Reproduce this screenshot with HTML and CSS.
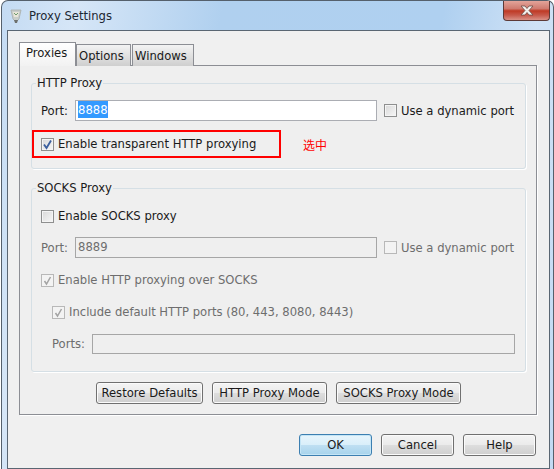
FILE: index.html
```html
<!DOCTYPE html>
<html lang="en">
  <head>
    <meta charset="UTF-8" />
    <title>Proxy Settings</title>
    <link rel="stylesheet" href="styles.css">
  </head>
  <body>
    <div class="window">
      <div class="titlebar">
        <svg class="appicon" width="12" height="16" viewBox="0 0 12 16">
          <path d="M1 2 L11 2 L9 11 Q6 15 3 11 Z" fill="#c9ceca" stroke="#a8ada9" stroke-width=".8"/>
          <path d="M3 4 L9 4 L8 9 L4 9 Z" fill="#e9e5d8"/>
          <path d="M4 5 L6 7 L8 5" fill="none" stroke="#6f9a6d" stroke-width="1"/>
          <path d="M4 12 L8 12 L7 15 L5 15 Z" fill="#6d706d"/>
        </svg>
        <span class="title">Proxy Settings</span>
        <div class="close">
          <svg width="16" height="11" viewBox="0 0 16 11">
            <path d="M2 1 H6 L8 3.5 L10 1 H14 L10 5.5 L14 10 H10 L8 7.5 L6 10 H2 L6 5.5 Z" fill="#f3f1ee" stroke="#6b4a44" stroke-width=".8"/>
          </svg>
        </div>
      </div>

      <div class="client">
        <div class="tabs">
          <div class="tab active">Proxies</div>
          <div class="tab tab-options">Options</div>
          <div class="tab tab-windows">Windows</div>
        </div>

        <div class="pane">
          <fieldset class="group">
            <legend>HTTP Proxy</legend>
            <div class="row port-row">
              <span class="label">Port:</span>
              <div class="field"><span class="selected">8888</span></div>
              <label class="check-label"><span class="check"></span>Use a dynamic port</label>
            </div>
            <div class="mark-row">
              <div class="redbox">
                <label class="check-label">
                  <span class="check">
                    <svg width="11" height="11" viewBox="0 0 11 11"><path d="M2 5.5 L4.5 9 L9 1.5" fill="none" stroke="#3b5f9e" stroke-width="1.8"/></svg>
                  </span>Enable transparent HTTP proxying
                </label>
              </div>
              <span class="note">选中</span>
            </div>
          </fieldset>

          <fieldset class="group socks">
            <legend>SOCKS Proxy</legend>
            <label class="check-label socks-enable"><span class="check"></span>Enable SOCKS proxy</label>
            <div class="row port-row off socks-port">
              <span class="label">Port:</span>
              <div class="field">8889</div>
              <label class="check-label"><span class="check"></span>Use a dynamic port</label>
            </div>
            <label class="check-label off spaced">
              <span class="check">
                <svg width="11" height="11" viewBox="0 0 11 11"><path d="M2.5 6 L4.5 9 L8.5 2" fill="none" stroke="#a3a3a3" stroke-width="1.5"/></svg>
              </span>Enable HTTP proxying over SOCKS
            </label>
            <label class="check-label off spaced indent">
              <span class="check">
                <svg width="11" height="11" viewBox="0 0 11 11"><path d="M2.5 6 L4.5 9 L8.5 2" fill="none" stroke="#a3a3a3" stroke-width="1.5"/></svg>
              </span>Include default HTTP ports (80, 443, 8080, 8443)
            </label>
            <div class="row ports-row off">
              <span class="label">Ports:</span>
              <div class="field wide"></div>
            </div>
          </fieldset>

          <div class="modes">
            <button class="btn btn-restore">Restore Defaults</button>
            <button class="btn btn-http">HTTP Proxy Mode</button>
            <button class="btn btn-socks">SOCKS Proxy Mode</button>
          </div>
        </div>

        <div class="footer">
          <button class="btn wide-btn default">OK</button>
          <button class="btn wide-btn">Cancel</button>
          <button class="btn wide-btn">Help</button>
        </div>
      </div>
    </div>
  </body>
</html>
```

FILE: styles.css
```css
html {
  font-family: "DejaVu Sans", sans-serif;
  font-size: 11.6px;
}

body {
  margin: 0;
  background-color: #fff;
  color: #1a1a1a;
  overflow: hidden;
}

.window {
  box-sizing: border-box;
  width: 553px;
  height: 469px;
  margin-left: 1px;
  padding: 0 3px 0 5px;
  border: 1px solid #55606c;
  border-bottom: 0;
  border-radius: 7px 7px 0 0;
  background: linear-gradient(100deg, #c4dbf3 0%, #d6e6f7 12%, #b0d0ef 35%, #afd0f0 70%, #cfe2f6 85%, #c2daf3 100%);
}

.titlebar {
  display: flex;
  align-items: center;
  height: 29px;
  padding-left: 3px;
}

.appicon {
  margin-right: 7px;
}

.title {
  color: #1c2733;
}

.close {
  display: flex;
  align-items: center;
  justify-content: center;
  box-sizing: border-box;
  width: 47px;
  height: 20px;
  margin: -9px 0 0 auto;
  border: 1px solid #5d3a37;
  border-top: 0;
  border-radius: 0 0 4px 4px;
  background: linear-gradient(#e3a49a 0%, #cf7b70 40%, #bf3a25 52%, #c75a4c 75%, #d99186 100%);
}

.client {
  box-sizing: border-box;
  height: 439px;
  padding: 11px 12px 0 11px;
  border: 1px solid #5a6673;
  background-color: #f0f0f0;
}

.tabs {
  display: flex;
  align-items: flex-end;
  height: 24px;
  margin-bottom: -1px;
}

.tab {
  box-sizing: border-box;
  height: 22px;
  padding: 0 0 0 2px;
  line-height: 22px;
  border: 1px solid #8c8e94;
  border-bottom: 0;
  background: linear-gradient(#f3f3f3, #cfcfcf);
}

.tab.active {
  position: relative;
  z-index: 1;
  width: 57px;
  height: 24px;
  margin-right: 0;
  padding-left: 6px;
  line-height: 21px;
  background: linear-gradient(#fff, #f2f2f2);
}

.tab-options {
  width: 55px;
}

.tab-windows {
  width: 62px;
  margin-left: 1px;
}

.pane {
  box-sizing: border-box;
  width: 518px;
  height: 350px;
  padding: 9px 10px 0 11px;
  border: 1px solid #8c8e94;
  background-color: #efefef;
  box-shadow: 1px 1px 0 #fff;
}

.group {
  box-sizing: border-box;
  width: 495px;
  margin: 0;
  padding: 9px 9px 0;
  border: 1px solid #d5dfe5;
  border-radius: 3px;
  box-shadow: 1px 1px 0 #fff;
  min-inline-size: 0;
}

.group legend {
  padding: 0 1px;
  margin-left: -5px;
  line-height: 16px;
}

.socks {
  height: 192px;
  margin-top: 11px;
  padding-top: 10px;
}

.row {
  display: flex;
  align-items: center;
}

.port-row .label {
  width: 34px;
}

.field {
  box-sizing: border-box;
  width: 302px;
  height: 21px;
  padding: 0 2px;
  line-height: 18px;
  border: 1px solid #abadb3;
  background-color: #fff;
}

.selected {
  display: inline-block;
  height: 17px;
  background-color: #3399ff;
  color: #fff;
}

.port-row .check-label {
  margin-left: 7px;
  white-space: nowrap;
}

.check-label {
  display: flex;
  align-items: center;
  height: 20px;
}

.check {
  display: flex;
  align-items: center;
  justify-content: center;
  box-sizing: border-box;
  width: 13px;
  height: 13px;
  margin-right: 4px;
  border: 1px solid #8e8f8f;
  background: linear-gradient(135deg, #d8d8d8, #f7f7f7);
  box-shadow: inset 0 0 0 1px #f4f4f4;
}

.mark-row {
  display: flex;
  align-items: center;
  margin: 9px 0 0 -9px;
  padding-bottom: 10px;
}

.redbox {
  display: flex;
  align-items: center;
  box-sizing: border-box;
  width: 249px;
  height: 28px;
  padding-left: 7px;
  border: 2px solid #f00;
}

.note {
  margin-left: 22px;
  font-family: "Noto Sans CJK SC", sans-serif;
  font-size: 12px;
  color: #f00;
}

.socks-port {
  margin-top: 11px;
}

.spaced {
  margin-top: 12px;
}

.off {
  color: #6d6d6d;
}

.off .field {
  background-color: transparent;
  border-color: #a6a6a6;
}

.off .check {
  border-color: #b8b8b8;
  background: #f3f3f3;
  box-shadow: none;
}

.indent {
  margin-left: 11px;
}

.ports-row {
  margin: 12px 0 0 11px;
}

.ports-row .label {
  width: 40px;
}

.field.wide {
  width: 423px;
  height: 20px;
}

.modes {
  display: flex;
  gap: 9px;
  margin: 10px 0 0 65px;
}

.btn {
  box-sizing: border-box;
  height: 22px;
  padding: 0;
  border: 1px solid #707070;
  border-radius: 3px;
  font: inherit;
  color: #1a1a1a;
  background: linear-gradient(#f4f4f4 0%, #ebebeb 48%, #dddddd 52%, #cfcfcf 100%);
  box-shadow: inset 0 0 0 1px #fbfbfb;
}

.btn-restore {
  width: 107px;
}

.btn-http {
  width: 115px;
}

.btn-socks {
  width: 125px;
}

.footer {
  display: flex;
  justify-content: flex-end;
  gap: 9px;
  width: 517px;
  margin-top: 19px;
}

.wide-btn {
  width: 73px;
}

.default {
  border-color: #3c7fb1;
  background: linear-gradient(#e8f5fc 0%, #d9effa 48%, #bedff2 52%, #a7d3ec 100%);
  box-shadow: inset 0 0 0 1px #c4e5f6;
}
```
